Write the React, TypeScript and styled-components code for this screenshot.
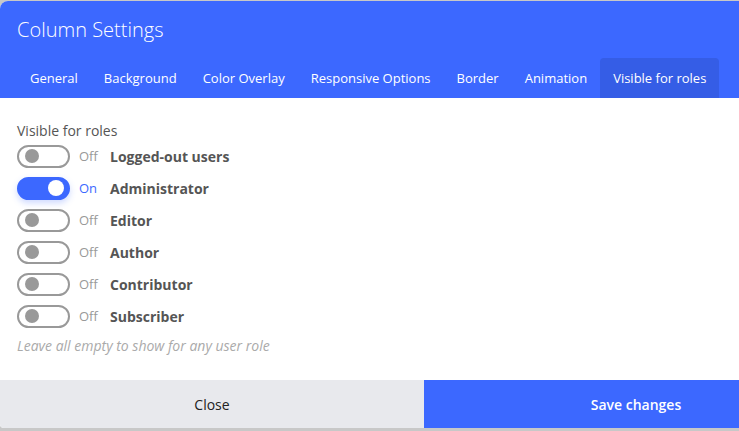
import React, { useState } from "react";
import styled, { createGlobalStyle } from "styled-components";

const GlobalStyle = createGlobalStyle`
  html, body {
    margin: 0;
    padding: 0;
    background: #c8c8c8;
    overflow: hidden;
  }
  body {
    font-family: "Open Sans", "Noto Sans", sans-serif;
  }
`;

const tabs = [
  "General",
  "Background",
  "Color Overlay",
  "Responsive Options",
  "Border",
  "Animation",
  "Visible for roles",
];

const initialRoles = [
  { name: "Logged-out users", on: false },
  { name: "Administrator", on: true },
  { name: "Editor", on: false },
  { name: "Author", on: false },
  { name: "Contributor", on: false },
  { name: "Subscriber", on: false },
];

export default function App() {
  const [active, setActive] = useState(6);
  const [roles, setRoles] = useState(initialRoles);

  const toggle = (i: number) => {
    setRoles(roles.map((r, j) => (j === i ? { ...r, on: !r.on } : r)));
  };

  return (
    <Page>
      <GlobalStyle />
      <Dialog>
        <Header>
          <Title>Column Settings</Title>
          <Tabs>
            {tabs.map((t, i) => (
              <Tab key={t} $active={i === active} onClick={() => setActive(i)}>
                {t}
              </Tab>
            ))}
          </Tabs>
        </Header>

        <Body>
          <Label>Visible for roles</Label>
          {roles.map((r, i) => (
            <Row key={r.name} onClick={() => toggle(i)}>
              <Switch $on={r.on}>
                <Knob $on={r.on} />
              </Switch>
              <State $on={r.on}>{r.on ? "On" : "Off"}</State>
              <RoleName>{r.name}</RoleName>
            </Row>
          ))}
          <Hint>Leave all empty to show for any user role</Hint>
        </Body>

        <Footer>
          <CloseButton>Close</CloseButton>
          <SaveButton>Save changes</SaveButton>
        </Footer>
      </Dialog>
    </Page>
  );
}

const Page = styled.div`
  width: 739px;
  height: 431px;
  overflow: hidden;
  background: #c8c8c8;
`;

const Dialog = styled.div`
  width: 848px;
  margin-top: 1px;
  background: #fff;
  border-radius: 8px 8px 4px 4px;
  overflow: hidden;
`;

const Header = styled.div`
  background: #3c68ff;
  padding: 16px 17px 0;
`;

const Title = styled.div`
  font-size: 20px;
  line-height: 26px;
  color: #fff;
  font-weight: 300;
`;

const Tabs = styled.div`
  display: flex;
  margin-top: 15px;
`;

const Tab = styled.div<{ $active: boolean }>`
  height: 40px;
  padding: 0 13px;
  display: flex;
  align-items: center;
  font-size: 13px;
  font-weight: 500;
  color: #fff;
  border-radius: 4px 4px 0 0;
  background: ${(p) => (p.$active ? "#355de6" : "transparent")};
  cursor: pointer;
  white-space: nowrap;
`;

const Body = styled.div`
  height: 282px;
  box-sizing: border-box;
  padding: 23px 17px 0;
  display: flex;
  flex-direction: column;
`;

const Label = styled.div`
  font-size: 14px;
  line-height: 20px;
  color: #555;
  margin-bottom: -1px;
`;

const Row = styled.div`
  height: 32px;
  display: flex;
  align-items: center;
  cursor: pointer;
`;

const Switch = styled.div<{ $on: boolean }>`
  box-sizing: border-box;
  width: 53px;
  height: 23px;
  border-radius: 12px;
  border: 2px solid ${(p) => (p.$on ? "#3c68ff" : "#999")};
  background: ${(p) => (p.$on ? "#3c68ff" : "#fff")};
  box-shadow: ${(p) => (p.$on ? "0 3px 6px rgba(60, 104, 255, 0.25)" : "none")};
  display: flex;
  align-items: center;
  justify-content: ${(p) => (p.$on ? "flex-end" : "flex-start")};
  padding: 0 ${(p) => (p.$on ? "4px" : "6px")};
`;

const Knob = styled.div<{ $on: boolean }>`
  width: ${(p) => (p.$on ? "16px" : "14px")};
  height: ${(p) => (p.$on ? "16px" : "14px")};
  border-radius: 50%;
  background: ${(p) => (p.$on ? "#fff" : "#999")};
`;

const State = styled.div<{ $on: boolean }>`
  width: 31px;
  margin-left: 9px;
  font-size: 13px;
  color: ${(p) => (p.$on ? "#3c68ff" : "#999")};
`;

const RoleName = styled.div`
  font-size: 14px;
  font-weight: 700;
  color: #555;
`;

const Hint = styled.div`
  margin-top: 4px;
  font-size: 14px;
  line-height: 20px;
  font-style: italic;
  color: #aaa;
`;

const Footer = styled.div`
  display: grid;
  grid-template-columns: 1fr 1fr;
  height: 48px;
`;

const CloseButton = styled.div`
  background: #e8e9ed;
  display: flex;
  align-items: center;
  justify-content: center;
  font-size: 14px;
  font-weight: 500;
  color: #222;
`;

const SaveButton = styled.div`
  background: #3c68ff;
  display: flex;
  align-items: center;
  justify-content: center;
  font-size: 14px;
  font-weight: 600;
  color: #fff;
`;
